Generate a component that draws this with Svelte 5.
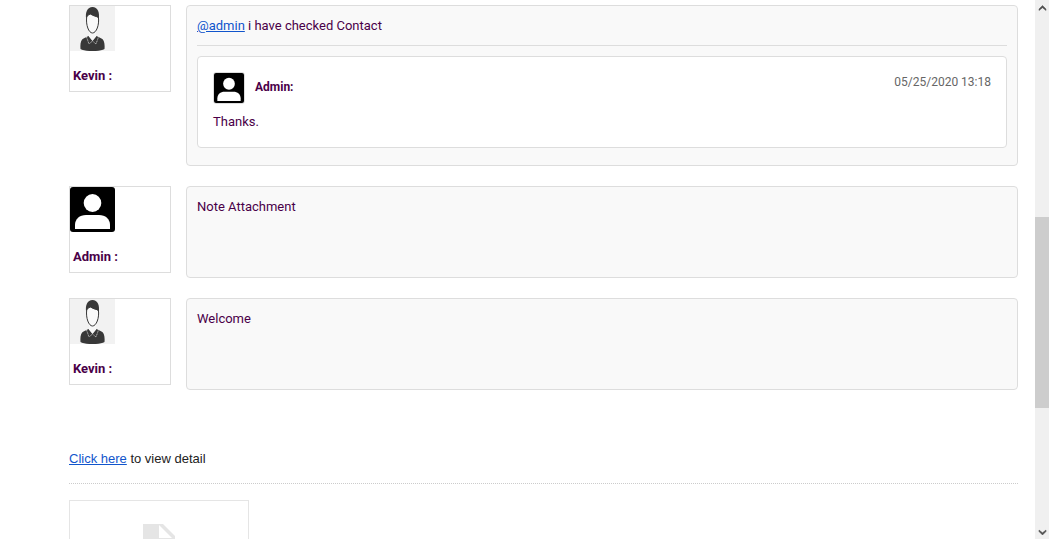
<script lang="ts">
    interface Reply {
        author: string;
        date: string;
        text: string;
    }

    interface Note {
        author: string;
        avatar: 'photo' | 'user';
        mention?: string;
        text: string;
        replies: Reply[];
    }

    const notes: Note[] = [
        {
            author: 'Kevin',
            avatar: 'photo',
            mention: '@admin',
            text: 'i have checked Contact',
            replies: [{ author: 'Admin', date: '05/25/2020 13:18', text: 'Thanks.' }]
        },
        { author: 'Admin', avatar: 'user', text: 'Note Attachment', replies: [] },
        { author: 'Kevin', avatar: 'photo', text: 'Welcome', replies: [] }
    ];
</script>

{#snippet userIcon(size: number)}
    <svg class="avatar" width={size} height={size} viewBox="0 0 45 45" aria-hidden="true">
        <rect width="45" height="45" rx="3" fill="#000" />
        <ellipse cx="22.5" cy="16" rx="8.8" ry="9" fill="#fff" />
        <path d="M5 42v-4c0-6 4.500-10 11-10h13c6.500 0 11 4 11 10v4z" fill="#fff" />
    </svg>
{/snippet}

{#snippet photoIcon()}
    <svg class="avatar" width="45" height="45" viewBox="0 0 45 45" aria-hidden="true">
        <rect width="45" height="45" fill="#f2f2f2" />
        <path d="M10.500 43c-.5-6 .5-9.500 3.500-10.800l4.500-2.200 4 5 4-5 4.500 2.200c3 1.300 4 4.800 3.500 10.800-4 2.800-20 2.800-24 0z" fill="#383838" />
        <path d="M16.500 31l2.500 7 3.500-3 3.500 3 2.500-7" fill="none" stroke="#ddd" stroke-width=".7" stroke-dasharray="1.200 .5" />
        <path d="M19 24v6.500l3.500 4 3.500-4V24z" fill="#f7f7f7" />
        <path d="M16.700 11c-1 8 2 16 5.800 16s7-8 5.900-16c-3-.5-5.500-1.500-8-3-2 1-3.300 1.500-3.700 3z" fill="#f9f9f9" stroke="#383838" stroke-width="1" />
        <path d="M16.200 13c-1.200-7 1.300-12 6.300-12s7.500 5 6.300 13c-.4-2.500-2-3.500-4.300-4-2-.5-3.500-1.200-4.500-2-2 1-3.200 2.500-3.800 5z" fill="#383838" />
    </svg>
{/snippet}

<div class="page">
    <main class="content">
        {#each notes as note}
            <article class="note">
                <div class="author">
                    {#if note.avatar === 'photo'}
                        {@render photoIcon()}
                    {:else}
                        {@render userIcon(45)}
                    {/if}
                    <strong class="author-name">{note.author} :</strong>
                </div>
                <div class="bubble">
                    <p class="text">
                        {#if note.mention}<a href="#admin">{note.mention}</a>{/if}
                        {note.text}
                    </p>
                    {#if note.replies.length}
                        <div class="replies">
                            {#each note.replies as reply}
                                <div class="reply">
                                    <div class="reply-head">
                                        <span class="reply-avatar">{@render userIcon(30)}</span>
                                        <strong class="reply-name">{reply.author}:</strong>
                                        <time>{reply.date}</time>
                                    </div>
                                    <p class="text">{reply.text}</p>
                                </div>
                            {/each}
                        </div>
                    {/if}
                </div>
            </article>
        {/each}

        <p class="detail"><a href="#detail">Click here</a> to view detail</p>

        <div class="attachment">
            <svg width="32" height="40" viewBox="0 0 32 40" aria-hidden="true">
                <path d="M0 0h20l12 12v28H0z" fill="#e5e5e5" />
                <path d="M16 1l13 13H16z" fill="#fff" />
            </svg>
        </div>
    </main>

    <div class="scrollbar" aria-hidden="true">
        <svg width="14" height="16" viewBox="0 0 14 16">
            <path d="M4 10.500V9l3.500-3.500L11 9v1.500L7.500 7.700z" fill="#505050" stroke="#505050" stroke-width=".5" />
        </svg>
        <div class="track">
            <div class="thumb"></div>
        </div>
        <svg width="14" height="16" viewBox="0 0 14 16">
            <path d="M4 7v1.500L7.500 12 11 8.500V7L7.500 9.800z" fill="#505050" stroke="#505050" stroke-width=".5" />
        </svg>
    </div>
</div>

<style>
    :global(body) {
        background: #fff;
    }

    .page {
        display: flex;
        height: 100vh;
        padding-right: 9px;
        box-sizing: border-box;
        overflow: hidden;
        font-family: Roboto, sans-serif;
        font-size: 13px;
        line-height: 20px;
        color: #4a0048;
    }

    .content {
        flex: 1;
        min-width: 0;
        padding: 5px 17px 0 69px;
    }

    a {
        color: #1155cc;
        text-decoration: underline;
    }

    .note {
        display: flex;
        align-items: flex-start;
        gap: 15px;
        margin-bottom: 20px;
    }

    .author {
        flex: none;
        width: 102px;
        box-sizing: border-box;
        border: 1px solid #ddd;
        padding-bottom: 5px;
    }

    .avatar {
        display: block;
        flex: none;
    }

    .author-name {
        display: block;
        margin-top: 15px;
        padding-left: 3px;
    }

    .bubble {
        flex: 1;
        min-width: 0;
        min-height: 92px;
        box-sizing: border-box;
        padding: 10px 10px 17px;
        background: #f9f9f9;
        border: 1px solid #ddd;
        border-radius: 4px;
    }

    .text {
        margin: 0;
    }

    .replies {
        margin-top: 9px;
        padding-top: 10px;
        border-top: 1px solid #ddd;
    }

    .reply {
        padding: 15px;
        background: #fff;
        border: 1px solid #ddd;
        border-radius: 4px;
    }

    .reply-head {
        display: flex;
        align-items: flex-start;
        margin-bottom: 8px;
    }

    .reply-avatar {
        flex: none;
        border: 1px solid #ddd;
        border-radius: 3px;
    }

    .reply-name {
        margin: 5px auto 0 10px;
        font-size: 12px;
    }

    time {
        font-size: 12px;
        color: #666;
    }

    .detail {
        margin: 59px 0 16px;
        padding-bottom: 14px;
        border-bottom: 1px dotted #ccc;
        font-family: "Liberation Sans", Arial, sans-serif;
        color: #222;
    }

    .attachment {
        display: flex;
        justify-content: center;
        width: 180px;
        box-sizing: border-box;
        padding: 23px 0 60px;
        border: 1px solid #e5e5e5;
    }

    .scrollbar {
        display: flex;
        flex-direction: column;
        flex: none;
        width: 14px;
        background: #f0f0f0;
    }

    .scrollbar svg {
        display: block;
        flex: none;
    }

    .track {
        display: flex;
        flex-direction: column;
        flex: 1;
        padding: 201px 0 115px;
    }

    .thumb {
        flex: 1;
        background: #cdcdcd;
    }
</style>
